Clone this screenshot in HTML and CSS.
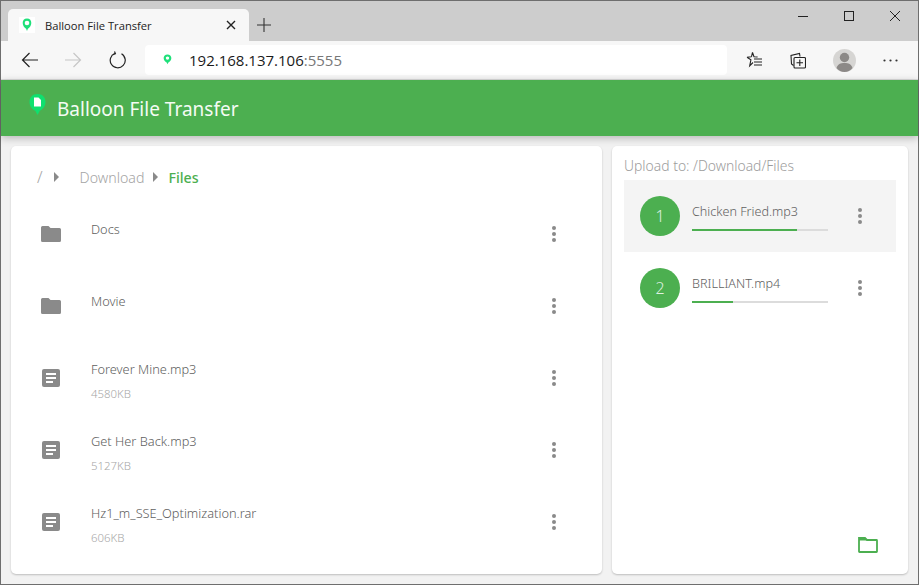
FILE: index.html
```html
<!DOCTYPE html>
<html lang="en">
<head>
<meta charset="utf-8">
<title>Balloon File Transfer</title>
<link rel="stylesheet" href="styles.css">
</head>
<body>
<div class="window">
  <div class="tabstrip">
    <div class="tab">
      <span class="favicon"><svg width="16" height="16" viewBox="0 0 16 16"><rect width="16" height="16" fill="#fff"/><path d="M8 1.500c-3 0-4.300 2-4.300 4.600 0 2.600 1.700 4.800 3.400 5.700L8 14l.9-2.200c1.700-.9 3.400-3.100 3.400-5.700C12.300 3.500 11 1.500 8 1.500z" fill="#1fe07a"/><circle cx="8" cy="6" r="2.300" fill="#fff"/></svg></span>
      <span class="tab-title">Balloon File Transfer</span>
      <svg class="tab-close" width="10" height="10" viewBox="0 0 10 10"><path d="M1 1l8 8M9 1l-8 8" stroke="#222" stroke-width="1.400" fill="none"/></svg>
    </div>
    <svg class="newtab" width="14" height="14" viewBox="0 0 14 14"><path d="M7 0v14M0 7h14" stroke="#333" stroke-width="1.100" fill="none"/></svg>
    <div class="caption">
      <svg class="cap" width="46" height="30" viewBox="0 0 46 30"><path d="M18 15.500h10" stroke="#222" fill="none"/></svg>
      <svg class="cap" width="46" height="30" viewBox="0 0 46 30"><rect x="18.500" y="10.500" width="9" height="9" stroke="#222" fill="none"/></svg>
      <svg class="cap" width="46" height="30" viewBox="0 0 46 30"><path d="M18 10l10 10M28 10L18 20" stroke="#222" fill="none"/></svg>
    </div>
  </div>
  <div class="toolbar">
    <svg class="tool-back" width="18" height="16" viewBox="0 0 18 16"><path d="M17 8H1.500M8.500 1L1.500 8l7 7" stroke="#222" stroke-width="1.200" fill="none"/></svg>
    <svg class="tool-fwd" width="18" height="16" viewBox="0 0 18 16"><path d="M1 8h15.500M9.500 1l7 7-7 7" stroke="#c6c6c6" stroke-width="1.200" fill="none"/></svg>
    <svg class="tool-reload" width="18" height="18" viewBox="0 0 18 18"><path d="M6 2.300A7.500 7.500 0 1 0 12.500 2.800M5.500 .5L6.400 2.600 4 3.600" stroke="#222" stroke-width="1.200" fill="none"/></svg>
    <div class="address">
      <svg class="addr-icon" width="9" height="12" viewBox="0 0 10 14"><path d="M5 .5C2.300.5.500 2.200.500 4.800c0 2.300 1.700 4.300 3.500 5L5 12l1-2.200c1.800-.7 3.500-2.700 3.500-5C9.500 2.200 7.700.5 5 .5z" fill="#1fe07a"/><circle cx="5" cy="4.800" r="2" fill="#fff"/></svg>
      <span class="url">192.168.137.106<span class="port">:5555</span></span>
    </div>
    <svg class="tool-fav" width="17" height="18" viewBox="0 0 17 18"><path d="M6.500 1.500l1.500 4.200 3.600.3M1 6.300l3.900 2.500-1.200 6 3.300-3.300M1 6.300l4.500-.6M6.500 1.500L5.500 5.700M8 8h8M8 11h8M8 14h8" stroke="#222" stroke-width="1.100" fill="none"/></svg>
    <svg class="tool-coll" width="16" height="17" viewBox="0 0 16 17"><path d="M3.500 13.500L1.500 12 1 3.500 9.500 1.500l.5 3" stroke="#222" stroke-width="1.100" fill="none"/><rect x="4" y="5.500" width="11.500" height="10.500" rx="1" stroke="#222" stroke-width="1.100" fill="#f7f7f7"/><path d="M9.800 7.500v6.500M6.500 10.800h6.500" stroke="#222" stroke-width="1.100" fill="none"/></svg>
    <svg class="tool-avatar" width="23" height="23" viewBox="0 0 23 23"><circle cx="11.500" cy="11.500" r="11.500" fill="#d6d5d3"/><circle cx="11.500" cy="8.500" r="4.700" fill="#8c8987"/><path d="M3.500 19c1-3.700 4-5 8-5s7 1.300 8 5c-2 2.500-5 4-8 4s-6-1.500-8-4z" fill="#8c8987"/></svg>
    <svg class="tool-more" width="15" height="3" viewBox="0 0 15 3"><circle cx="1.500" cy="1.500" r="1.100" fill="#333"/><circle cx="7.500" cy="1.500" r="1.100" fill="#333"/><circle cx="13.500" cy="1.500" r="1.100" fill="#333"/></svg>
  </div>
  <header class="appbar">
    <svg class="app-logo" width="17" height="24" viewBox="0 0 17 24"><path d="M8.500 0C3.600 0 .5 3.300.5 8c0 4 2.800 7.500 5.800 8.800L8.500 21l2.200-4.200c3-1.300 5.800-4.800 5.800-8.800C16.500 3.300 13.400 0 8.500 0z" fill="#0fe06f"/><path d="M5 3.500h4.500L12 6v6.500H5z" fill="#fff"/></svg>
    <h1 class="app-title">Balloon File Transfer</h1>
  </header>
  <main class="content">
    <section class="card files">
      <nav class="crumbs">
        <span class="crumb crumb-root">/</span>
        <span class="tri tri-root"></span>
        <span class="crumb">Download</span>
        <span class="tri"></span>
        <span class="crumb crumb-current">Files</span>
      </nav>
      <div class="row folder">
        <svg class="row-icon" width="20" height="16" viewBox="0 0 20 16"><path d="M1.500 0h6l2 2h9A1.500 1.500 0 0 1 20 3.500v11a1.500 1.500 0 0 1-1.500 1.500h-17A1.500 1.500 0 0 1 0 14.500v-13A1.500 1.500 0 0 1 1.500 0z" fill="#8a8a8a"/></svg>
        <div class="row-text"><div class="name">Docs</div></div>
        <span class="kebab"><i></i><i></i><i></i></span>
      </div>
      <div class="row folder">
        <svg class="row-icon" width="20" height="16" viewBox="0 0 20 16"><path d="M1.500 0h6l2 2h9A1.500 1.500 0 0 1 20 3.500v11a1.500 1.500 0 0 1-1.500 1.500h-17A1.500 1.500 0 0 1 0 14.500v-13A1.500 1.500 0 0 1 1.500 0z" fill="#8a8a8a"/></svg>
        <div class="row-text"><div class="name">Movie</div></div>
        <span class="kebab"><i></i><i></i><i></i></span>
      </div>
      <div class="row file">
        <svg class="row-icon doc" width="18" height="18" viewBox="0 0 18 18"><rect width="18" height="18" rx="2" fill="#8a8a8a"/><path d="M4 5h10M4 9h10M4 13h7" stroke="#fff" stroke-width="2" fill="none"/></svg>
        <div class="row-text"><div class="name">Forever Mine.mp3</div><div class="size">4580KB</div></div>
        <span class="kebab"><i></i><i></i><i></i></span>
      </div>
      <div class="row file">
        <svg class="row-icon doc" width="18" height="18" viewBox="0 0 18 18"><rect width="18" height="18" rx="2" fill="#8a8a8a"/><path d="M4 5h10M4 9h10M4 13h7" stroke="#fff" stroke-width="2" fill="none"/></svg>
        <div class="row-text"><div class="name">Get Her Back.mp3</div><div class="size">5127KB</div></div>
        <span class="kebab"><i></i><i></i><i></i></span>
      </div>
      <div class="row file">
        <svg class="row-icon doc" width="18" height="18" viewBox="0 0 18 18"><rect width="18" height="18" rx="2" fill="#8a8a8a"/><path d="M4 5h10M4 9h10M4 13h7" stroke="#fff" stroke-width="2" fill="none"/></svg>
        <div class="row-text"><div class="name">Hz1_m_SSE_Optimization.rar</div><div class="size">606KB</div></div>
        <span class="kebab"><i></i><i></i><i></i></span>
      </div>
    </section>
    <aside class="card uploads">
      <div class="upload-title">Upload to: /Download/Files</div>
      <div class="upload active">
        <span class="num">1</span>
        <div class="upload-body">
          <div class="upload-name">Chicken Fried.mp3</div>
          <div class="bar"><div class="bar-fill" style="width:77%"></div></div>
        </div>
        <span class="kebab"><i></i><i></i><i></i></span>
      </div>
      <div class="upload">
        <span class="num">2</span>
        <div class="upload-body">
          <div class="upload-name">BRILLIANT.mp4</div>
          <div class="bar"><div class="bar-fill" style="width:30%"></div></div>
        </div>
        <span class="kebab"><i></i><i></i><i></i></span>
      </div>
      <div class="upload-foot">
        <svg width="20" height="16" viewBox="0 0 20 16"><path d="M1 1h6l2 2h9.500a.500.500 0 0 1 .5.500V14.500a.500.500 0 0 1-.5.500h-17a.500.500 0 0 1-.5-.500z" fill="none" stroke="#4caf50" stroke-width="1.800"/><path d="M1 1h6l2 2.500H1z" fill="#4caf50"/></svg>
      </div>
    </aside>
  </main>
</div>
</body>
</html>
```
FILE: styles.css
```css
* { box-sizing: border-box; }
html, body { margin: 0; height: 100%; overflow: hidden; }
body { font-family: "Noto Sans", "Open Sans", sans-serif; font-weight: 300; background: #f2f2f2; }
.window {
  height: 585px; display: flex; flex-direction: column;
  border: 1px solid #6e6e6e;
  background: #f2f2f2;
}
.tabstrip { height: 40px; background: #cdcdcd; display: flex; align-items: flex-start; flex: none; }
.tab {
  width: 241px; height: 32px; margin: 8px 0 0 7px; padding: 0 0 0 11px;
  background: #f7f7f7; border-radius: 5px 5px 0 0; display: flex; align-items: center; flex: none;
}
.favicon { width: 16px; height: 16px; display: flex; }
.tab-title { font: 11.200px "Open Sans", sans-serif; color: #222; margin-left: 10px; width: 178px; white-space: nowrap; }
.tab-close { flex: none; margin-left: 3px; }
.newtab { margin: 17px 0 0 8px; flex: none; }
.caption { margin-left: auto; display: flex; }
.cap { display: block; }
.toolbar {
  height: 39px; flex: none; background: #f7f7f7; border-bottom: 1px solid #dcdcdc;
  display: flex; align-items: center; padding: 0 0 0 20px;
}
.tool-fwd { margin-left: 25px; }
.tool-reload { margin-left: 27px; }
.address {
  width: 582px; height: 30px; margin-left: 18px; background: #fff; border-radius: 4px;
  display: flex; align-items: center; padding-left: 18px; flex: none;
}
.addr-icon { flex: none; }
.url { font: 15px "Open Sans", sans-serif; color: #1a1a1a; margin-left: 17px; white-space: nowrap; }
.port { color: #777; }
.tool-fav { margin-left: 19px; flex: none; }
.tool-coll { margin-left: 27px; flex: none; }
.tool-avatar { margin-left: 27px; flex: none; }
.tool-more { margin-left: 27px; flex: none; }
.appbar {
  height: 56px; flex: none; background: #4caf50; display: flex; align-items: center;
  padding: 0 0 0 28px; box-shadow: 0 2px 8px rgba(0,0,0,.25); position: relative;
}
.app-logo { margin-top: -5px; flex: none; }
.app-title { margin: 2px 0 0 11px; font-size: 19px; font-weight: 400; color: #f4fbf4; white-space: nowrap; }
.content { flex: 1; display: flex; gap: 10px; padding: 10px; min-height: 0; }
.card { background: #fff; border-radius: 5px; box-shadow: 0 1px 2px rgba(0,0,0,.22); }
.files { width: 591px; flex: none; padding: 0 30px; }
.uploads { flex: 1; padding: 0 12px; display: flex; flex-direction: column; }
.crumbs { height: 52px; padding-top: 10px; display: flex; align-items: center; font-size: 14.200px; color: #a4a4a4; }
.crumb-root { margin-left: -4px; font-size: 16px; }
.tri { width: 0; height: 0; border-left: 5px solid #8a8a8a; border-top: 5px solid transparent; border-bottom: 5px solid transparent; margin: 0 10px 0 9px; }
.tri-root { margin: 0 21px 0 11px; }
.crumb-current { color: #4caf50; font-weight: 500; }
.row { height: 72px; display: flex; align-items: flex-start; }
.row-icon { flex: none; margin-top: 28px; }
.row-icon.doc { margin: 27px 1px 0 1px; }
.row-text { margin-left: 30px; flex: 1; }
.folder .row-text { padding-top: 22px; }
.file .row-text { padding-top: 18px; }
.name { font-size: 12.800px; line-height: 18px; color: #606060; white-space: nowrap; }
.size { font-size: 11.400px; line-height: 16px; color: #a6a6a6; margin-top: 8px; }
.kebab { width: 4px; display: flex; flex-direction: column; gap: 2px; flex: none; }
.kebab i { width: 4px; height: 4px; border-radius: 50%; background: #8a8a8a; display: block; }
.row .kebab { margin: 28px 16px 0 0; }
.upload-title { height: 34px; font-size: 13.900px; line-height: 40px; color: #9c9c9c; white-space: nowrap; }
.upload { height: 72px; display: flex; align-items: center; padding: 0 34px 0 16px; }
.upload.active { background: #f4f4f4; }
.num {
  width: 40px; height: 40px; border-radius: 50%; background: #4caf50; color: #dff0e0;
  font-size: 16px; display: flex; align-items: center; justify-content: center; flex: none;
}
.upload-body { width: 136px; margin-left: 12px; flex: none; }
.upload-name { font-size: 12.600px; line-height: 18px; color: #606060; white-space: nowrap; margin-top: 2px; }
.bar { height: 2px; background: #dcdcdc; margin-top: 8px; }
.bar-fill { height: 2px; background: #4caf50; }
.upload .kebab { margin-left: 30px; }
.upload-foot { margin-top: auto; display: flex; justify-content: flex-end; padding: 0 18px 21px 0; }
```
